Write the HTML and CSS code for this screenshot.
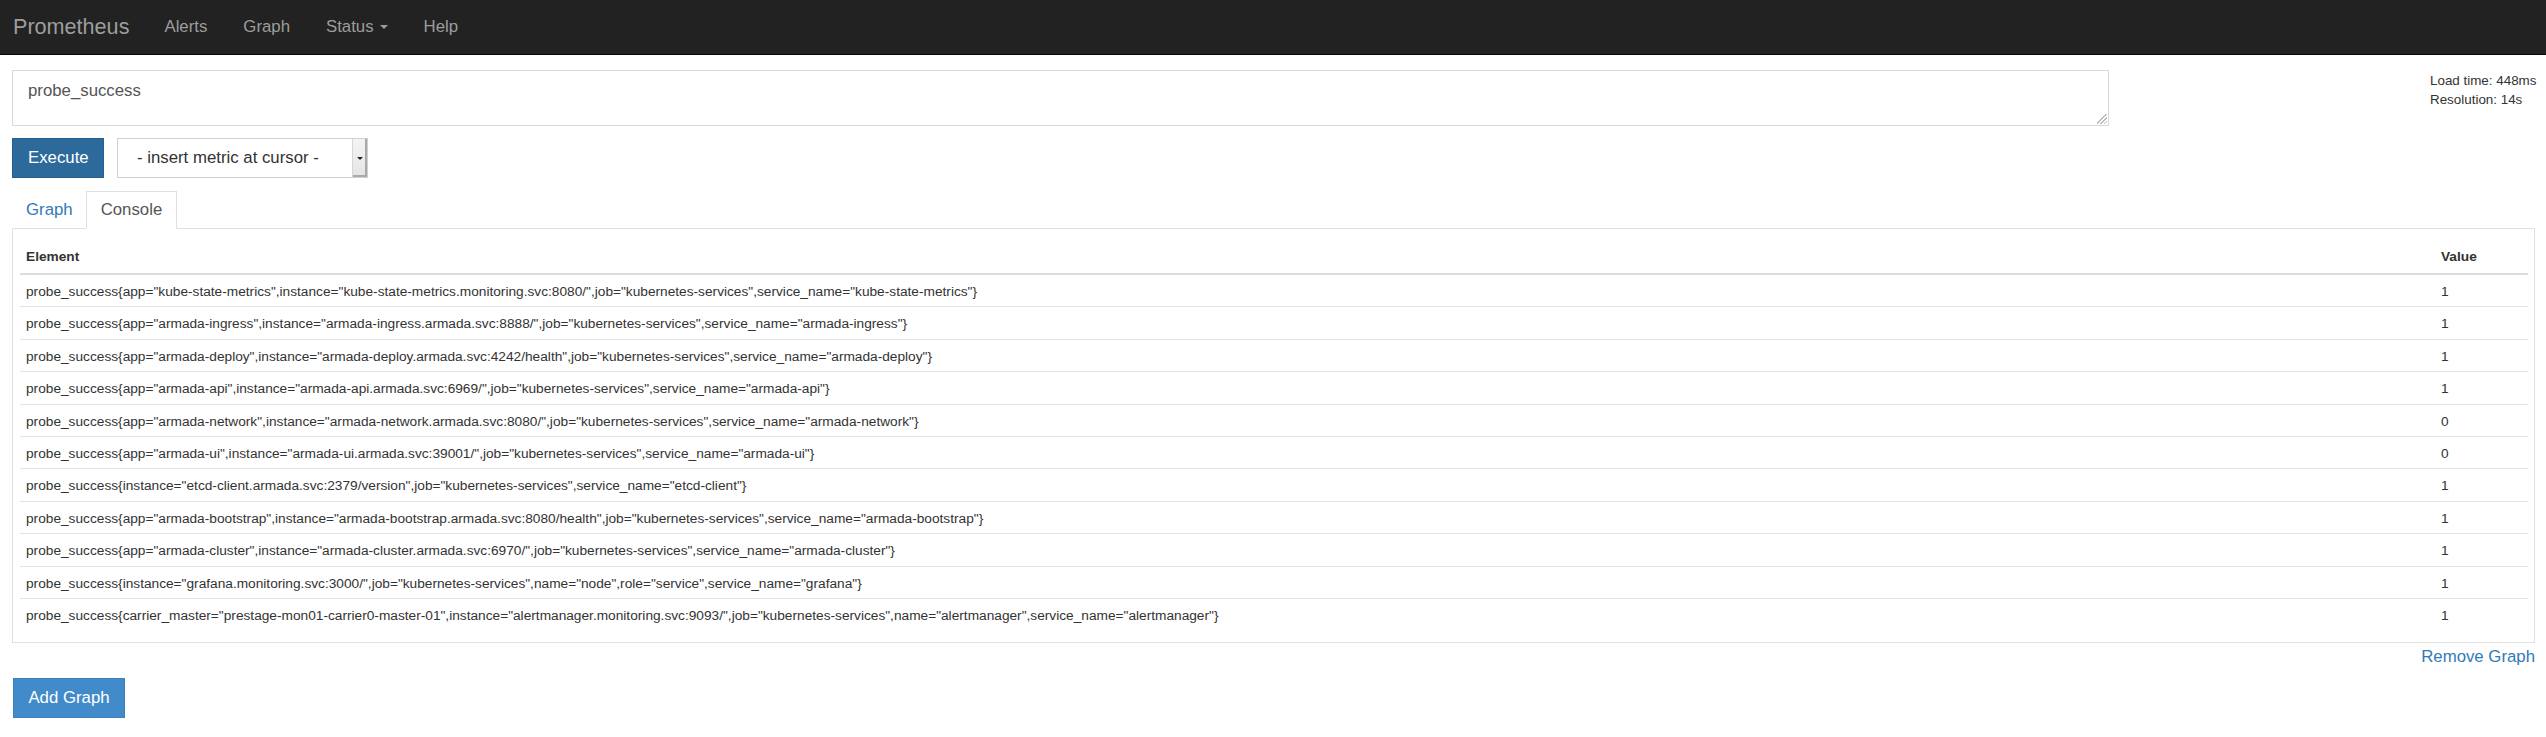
FILE: index.html
```html
<!DOCTYPE html>
<html>
<head>
<meta charset="utf-8">
<title>Prometheus Time Series Collection and Processing Server</title>
<link rel="stylesheet" href="styles.css">
</head>
<body>
<nav class="navbar">
  <a class="brand" href="#">Prometheus</a>
  <a class="nav-link" href="#">Alerts</a>
  <a class="nav-link" href="#">Graph</a>
  <a class="nav-link" href="#">Status <span class="caret"></span></a>
  <a class="nav-link" href="#">Help</a>
</nav>
<main class="page">
  <div class="query-row">
    <div class="expr-wrap">
      <div class="expr">probe_success<span class="grip"></span></div>
    </div>
    <div class="stats">
      <div>Load time: 448ms</div>
      <div>Resolution: 14s</div>
    </div>
  </div>
  <div class="controls">
    <button class="btn btn-exec">Execute</button>
    <div class="select">
      <span class="select-text">- insert metric at cursor -</span>
      <span class="select-arrow"><span class="tri"></span></span>
    </div>
  </div>
  <div class="tabs">
    <a class="tab" href="#">Graph</a>
    <a class="tab active" href="#">Console</a>
    <div class="tab-fill"></div>
  </div>
  <div class="tab-content">
    <table class="console">
      <thead>
        <tr><th>Element</th><th class="val">Value</th></tr>
      </thead>
      <tbody>
        <tr><td>probe_success{app="kube-state-metrics",instance="kube-state-metrics.monitoring.svc:8080/",job="kubernetes-services",service_name="kube-state-metrics"}</td><td class="val">1</td></tr>
        <tr><td>probe_success{app="armada-ingress",instance="armada-ingress.armada.svc:8888/",job="kubernetes-services",service_name="armada-ingress"}</td><td class="val">1</td></tr>
        <tr><td>probe_success{app="armada-deploy",instance="armada-deploy.armada.svc:4242/health",job="kubernetes-services",service_name="armada-deploy"}</td><td class="val">1</td></tr>
        <tr><td>probe_success{app="armada-api",instance="armada-api.armada.svc:6969/",job="kubernetes-services",service_name="armada-api"}</td><td class="val">1</td></tr>
        <tr><td>probe_success{app="armada-network",instance="armada-network.armada.svc:8080/",job="kubernetes-services",service_name="armada-network"}</td><td class="val">0</td></tr>
        <tr><td>probe_success{app="armada-ui",instance="armada-ui.armada.svc:39001/",job="kubernetes-services",service_name="armada-ui"}</td><td class="val">0</td></tr>
        <tr><td>probe_success{instance="etcd-client.armada.svc:2379/version",job="kubernetes-services",service_name="etcd-client"}</td><td class="val">1</td></tr>
        <tr><td>probe_success{app="armada-bootstrap",instance="armada-bootstrap.armada.svc:8080/health",job="kubernetes-services",service_name="armada-bootstrap"}</td><td class="val">1</td></tr>
        <tr><td>probe_success{app="armada-cluster",instance="armada-cluster.armada.svc:6970/",job="kubernetes-services",service_name="armada-cluster"}</td><td class="val">1</td></tr>
        <tr><td>probe_success{instance="grafana.monitoring.svc:3000/",job="kubernetes-services",name="node",role="service",service_name="grafana"}</td><td class="val">1</td></tr>
        <tr><td>probe_success{carrier_master="prestage-mon01-carrier0-master-01",instance="alertmanager.monitoring.svc:9093/",job="kubernetes-services",name="alertmanager",service_name="alertmanager"}</td><td class="val">1</td></tr>
      </tbody>
    </table>
  </div>
  <div class="remove-row"><a class="remove" href="#">Remove Graph</a></div>
  <button class="btn btn-add">Add Graph</button>
</main>
</body>
</html>
```
FILE: styles.css
```css
html, body {
  margin: 0;
  padding: 0;
  background: #fff;
  font-family: "Liberation Sans", Arial, Helvetica, sans-serif;
  color: #333;
}
a { text-decoration: none; }

.navbar {
  display: flex;
  align-items: center;
  height: 55px;
  background: #222;
  border-bottom: 1px solid #080808;
  box-sizing: border-box;
}
.brand {
  color: #9d9d9d;
  font-size: 21.6px;
  padding: 0 17px 0 13px;
}
.nav-link {
  color: #9d9d9d;
  font-size: 16.8px;
  padding: 0 18px;
  display: flex;
  align-items: center;
}
.caret {
  display: inline-block;
  width: 0;
  height: 0;
  margin-left: 6px;
  border-top: 4px solid #9d9d9d;
  border-left: 4px solid transparent;
  border-right: 4px solid transparent;
}

.page {
  padding: 0 11px 0 12px;
}
.query-row {
  display: flex;
  align-items: flex-start;
}
.expr-wrap {
  width: 2097px;
  padding-top: 15px;
}
.expr {
  position: relative;
  height: 56px;
  box-sizing: border-box;
  border: 1px solid #d9d9d9;
  padding: 9px 15px;
  font-size: 16.8px;
  line-height: 22px;
  color: #555;
}
.grip {
  position: absolute;
  right: 1px;
  bottom: 1px;
  width: 10px;
  height: 10px;
  background: linear-gradient(135deg, transparent 0 45%, #bbb 45% 52%, transparent 52% 64%, #bbb 64% 71%, transparent 71% 83%, #bbb 83% 90%, transparent 90%);
}
.stats {
  margin-left: auto;
  width: 105px;
  padding-top: 16px;
  font-size: 13.4px;
  line-height: 19px;
  color: #333;
  white-space: nowrap;
}

.controls {
  display: flex;
  align-items: center;
  margin-top: 12px;
  gap: 13px;
}
.btn {
  font-family: inherit;
  font-size: 16.8px;
  color: #fff;
  border: 1px solid transparent;
  height: 40px;
  padding: 0 15px;
  cursor: pointer;
}
.btn-exec {
  width: 92px;
  background: #2d6a9c;
  border-color: #285e8e;
}
.select {
  display: flex;
  align-items: stretch;
  width: 251px;
  height: 40px;
  box-sizing: border-box;
  border: 1px solid #d0d0d0;
  background: #fff;
}
.select-text {
  flex: 1;
  display: flex;
  align-items: center;
  padding-left: 19px;
  font-size: 16.8px;
  color: #333;
}
.select-arrow {
  width: 14px;
  background: linear-gradient(#f4f4f4, #e4e4e4);
  border-left: 1px solid #d6d6d6;
  box-shadow: inset -2px -2px 0 #a9a9a9;
  display: flex;
  align-items: center;
  justify-content: center;
}
.tri {
  width: 0;
  height: 0;
  border-top: 3px solid #222;
  border-left: 3px solid transparent;
  border-right: 3px solid transparent;
  margin-right: 1px;
}

.tabs {
  display: flex;
  align-items: flex-end;
  margin-top: 14px;
  height: 37px;
}
.tab {
  font-size: 16.8px;
  line-height: 22px;
  padding: 7px 12px 7px 13px;
  color: #337ab7;
  border: 1px solid transparent;
  border-bottom: 1px solid #e0e0e0;
}
.tab.active {
  color: #555;
  border: 1px solid #e0e0e0;
  border-bottom-color: #fff;
  padding: 7px 14px;
  background: #fff;
}
.tab-fill {
  flex: 1;
  border-bottom: 1px solid #e0e0e0;
}

.tab-content {
  border: 1px solid #e0e0e0;
  border-top: 0;
  padding: 7px 6px 12px 7px;
}
.console {
  width: 100%;
  border-collapse: collapse;
  font-size: 13.7px;
  color: #333;
}
.console th {
  text-align: left;
  font-weight: bold;
  padding: 11px 6px 6px 6px;
  line-height: 20px;
  border-bottom: 2px solid #ddd;
}
.console td {
  padding: 7px 6px 5px 6px;
  line-height: 19.4px;
  border-top: 1px solid #e2e2e2;
}
.console tbody tr:first-child td { border-top: 0; }
.console .val {
  width: 81px;
  padding-left: 6px;
}

.remove-row {
  display: flex;
  justify-content: flex-end;
  padding-top: 3px;
  height: 32px;
}
.remove {
  font-size: 16.8px;
  line-height: 22px;
  color: #337ab7;
}
.btn-add {
  display: block;
  width: 112px;
  margin-left: 1px;
  padding: 0;
  text-align: center;
  background: #428bca;
  border-color: #3d80bb;
}
```
